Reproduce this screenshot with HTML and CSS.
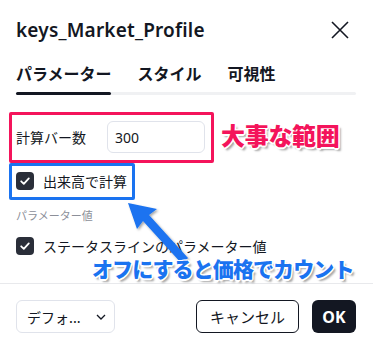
FILE: index.html
```html
<!DOCTYPE html>
<html lang="ja">
<head>
<meta charset="utf-8">
<link rel="stylesheet" href="styles.css">
</head>
<body>
<div class="dialog">
  <div class="header">
    <div class="title">keys_Market_Profile</div>
    <svg class="close" width="18" height="18" viewBox="0 0 18 18"><path d="M1 1L17 17M17 1L1 17" stroke="#131722" stroke-width="1.6" fill="none"/></svg>
  </div>
  <div class="tabs">
    <div class="tab active">パラメーター</div>
    <div class="tab">スタイル</div>
    <div class="tab">可視性</div>
  </div>
  <div class="tabbar"><div class="tabbar-active"></div></div>
  <div class="content">
    <div class="row">
      <div class="label">計算バー数</div>
      <div class="input">300</div>
    </div>
    <div class="row check-row">
      <span class="checkbox"><svg width="12" height="12" viewBox="0 0 12 12"><path d="M2.2 6.3L4.8 8.8L9.8 3.4" stroke="#fff" stroke-width="1.8" fill="none" stroke-linecap="round" stroke-linejoin="round"/></svg></span>
      <span class="check-label">出来高で計算</span>
    </div>
    <div class="section">パラメーター値</div>
    <div class="row check-row last">
      <span class="checkbox"><svg width="12" height="12" viewBox="0 0 12 12"><path d="M2.2 6.3L4.8 8.8L9.8 3.4" stroke="#fff" stroke-width="1.8" fill="none" stroke-linecap="round" stroke-linejoin="round"/></svg></span>
      <span class="check-label">ステータスラインのパラメーター値</span>
    </div>
  </div>
  <div class="footer">
    <div class="select">デフォ...<svg class="chev" width="10" height="6" viewBox="0 0 10 6"><path d="M1 1L5 5L9 1" stroke="#131722" stroke-width="1.3" fill="none"/></svg></div>
    <div class="spacer"></div>
    <div class="btn cancel">キャンセル</div>
    <div class="btn ok">OK</div>
  </div>

  <div class="note-box pink"></div>
  <div class="note-box blue"></div>
  <svg class="arrow" width="373" height="349" viewBox="0 0 373 349">
    <defs>
      <filter id="sh" x="-20%" y="-20%" width="140%" height="140%">
        <feDropShadow dx="1.5" dy="1.5" stdDeviation="1.2" flood-color="#000" flood-opacity="0.35"/>
      </filter>
    </defs>
    <path d="M128 203 L157 209 L149 215 L188 258 L182 264 L143 221 L137 229 Z" fill="#1a73f0" filter="url(#sh)"/>
  </svg>
  <div class="note pink-text">大事な範囲</div>
  <div class="note blue-text">オフにすると価格でカウント</div>
</div>
</body>
</html>
```

FILE: styles.css
```css
* { box-sizing: border-box; }
html, body { margin: 0; padding: 0; background: #fff; }
body {
  font-family: "Noto Sans", "Noto Sans CJK JP", sans-serif;
  color: #131722;
  width: 373px;
  height: 349px;
  overflow: hidden;
}
.dialog { position: relative; width: 373px; height: 349px; padding-top: 15px; }
.header {
  display: flex;
  align-items: center;
  height: 30px;
  padding: 0 24px 0 16px;
}
.title {
  flex: 1;
  font-size: 19px;
  font-weight: 600;
  letter-spacing: 0.2px;
}
.close { display: block; }
.tabs {
  display: flex;
  gap: 26px;
  margin-top: 14px;
  padding: 0 16px;
  height: 28px;
  align-items: center;
}
.tab {
  font-size: 16px;
  font-weight: 700;
  font-family: "Noto Sans CJK JP", sans-serif;
}
.tabbar {
  margin: 5px 17px 0 16px;
  height: 3px;
  background: #f0f1f3;
  border-radius: 2px;
}
.tabbar-active {
  width: 95px;
  height: 3px;
  background: #131722;
  border-radius: 2px;
}
.content { padding: 0 16px; }
.row {
  display: flex;
  align-items: center;
  height: 32px;
  margin-top: 26px;
}
.label {
  width: 91px;
  font-size: 14px;
  font-family: "Noto Sans CJK JP", sans-serif;
}
.input {
  width: 98px;
  height: 32px;
  border: 1px solid #e0e3eb;
  border-radius: 6px;
  padding-left: 7px;
  display: flex;
  align-items: center;
  font-size: 14px;
}
.check-row { margin-top: 12px; }
.check-row.last { margin-top: 7px; }
.checkbox {
  width: 18px;
  height: 18px;
  border-radius: 4px;
  background: #2a2e39;
  display: flex;
  align-items: center;
  justify-content: center;
}
.check-label {
  margin-left: 9px;
  font-size: 14px;
  line-height: 18px;
  font-family: "Noto Sans CJK JP", sans-serif;
}
.section {
  margin-top: 10px;
  height: 16px;
  line-height: 16px;
  font-size: 11px;
  color: #8c8f99;
  font-family: "Noto Sans CJK JP", sans-serif;
}
.footer {
  margin-top: 21px;
  border-top: 1px solid #e8e9ec;
  padding: 16px 17px 0 16px;
  display: flex;
  align-items: center;
}
.spacer { flex: 1; }
.select {
  width: 99px;
  height: 33px;
  border: 1px solid #e0e3eb;
  border-radius: 6px;
  display: flex;
  align-items: center;
  padding: 0 8px 0 10px;
  font-size: 14px;
  justify-content: space-between;
  font-family: "Noto Sans CJK JP", sans-serif;
}
.btn {
  height: 33px;
  border-radius: 6px;
  display: flex;
  align-items: center;
  justify-content: center;
  font-size: 15px;
}
.cancel {
  width: 103px;
  border: 1px solid #131722;
  font-family: "Noto Sans CJK JP", sans-serif;
}
.ok {
  width: 44px;
  margin-left: 13px;
  background: #131722;
  color: #fff;
  font-weight: 700;
  font-size: 16px;
  font-family: "Noto Sans", sans-serif;
}
.note-box {
  position: absolute;
  border-style: solid;
  border-width: 3px;
  border-radius: 2px;
}
.note-box.pink { left: 9px; top: 112px; width: 205px; height: 51px; border-color: #f4145b; }
.note-box.blue { left: 9px; top: 163px; width: 126px; height: 37px; border-color: #1a73f0; }
.arrow { position: absolute; left: 0; top: 0; pointer-events: none; }
.note {
  position: absolute;
  font-family: "Noto Sans CJK JP", sans-serif;
  font-weight: 900;
  white-space: nowrap;
  text-shadow:
    -1px -1px 0 #fff, 1px -1px 0 #fff, -1px 1px 0 #fff, 1px 1px 0 #fff,
    0 -1.5px 0 #fff, 0 1.5px 0 #fff, -1.5px 0 0 #fff, 1.5px 0 0 #fff,
    2.5px 2.5px 2px rgba(0,0,0,0.35);
}
.pink-text { left: 221px; top: 117px; font-size: 24px; line-height: 36px; color: #f4145b; letter-spacing: -0.3px; }
.blue-text { left: 92px; top: 255px; font-size: 21px; line-height: 26px; color: #1a73f0; letter-spacing: -0.9px; }
```
